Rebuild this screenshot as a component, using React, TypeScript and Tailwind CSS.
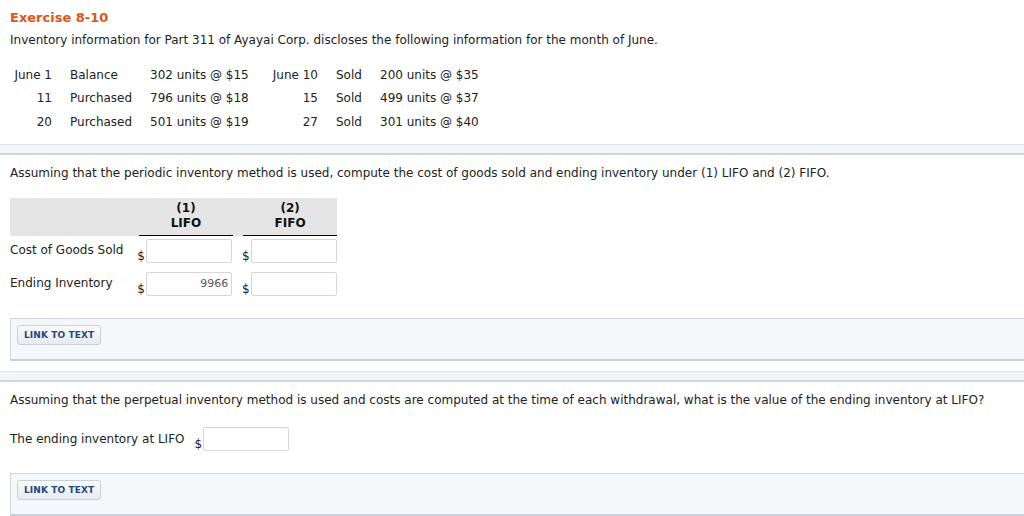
const rows = [
  ["June 1", "Balance", "302 units @ $15", "June 10", "Sold", "200 units @ $35"],
  ["11", "Purchased", "796 units @ $18", "15", "Sold", "499 units @ $37"],
  ["20", "Purchased", "501 units @ $19", "27", "Sold", "301 units @ $40"],
];

function Separator() {
  return <div className="h-[11px] border-t border-[#dfe5ec] border-b-2 border-b-[#cfd7e1] bg-[#f2f5f8]" />;
}

function LinkBox() {
  return (
    <div className="ml-[10px] h-[43px] border border-[#cfd6df] border-b-2 border-b-[#c9d1dc] border-r-0 bg-[#f5f8fb] pl-[6px] pt-[6px]">
      <button className="h-[20px] px-[6px] rounded-[3px] border border-[#c8d0da] bg-gradient-to-b from-[#fbfcfd] to-[#e6ebf1] text-[9px] font-bold text-[#27477f] leading-none tracking-[0.1px]">
        LINK TO TEXT
      </button>
    </div>
  );
}

function Money({ value }: { value?: string }) {
  return (
    <div className="flex items-end">
      <span className="w-[9px] text-[12px] leading-none mb-[1px]">$</span>
      <div className="w-[86px] h-[24px] border border-[#d6d6d6] rounded-[2px] bg-white text-right pr-[3px] text-[11px] text-[#555] leading-[22px]">
        {value}
      </div>
    </div>
  );
}

export default function App() {
  return (
    <div className="w-[1024px] h-[516px] overflow-hidden bg-white text-[#222] text-[12px] font-['DejaVu_Sans',Verdana,sans-serif]">
      <div className="px-[10px] pt-[10px]">
        <div className="text-[13px] font-bold text-[#e05418] leading-[16px]">Exercise 8-10</div>
        <div className="mt-[6px] leading-[16px]">
          Inventory information for Part 311 of Ayayai Corp. discloses the following information for the month of June.
        </div>
        <div className="mt-[15px] flex flex-col">
          {rows.map((r, i) => (
            <div key={i} className="flex h-[23.5px] items-center whitespace-nowrap">
              <div className="w-[42px] text-right">{r[0]}</div>
              <div className="ml-[18px] w-[80px]">{r[1]}</div>
              <div className="w-[118px]">{r[2]}</div>
              <div className="w-[50px] text-right">{r[3]}</div>
              <div className="ml-[18px] w-[44px]">{r[4]}</div>
              <div>{r[5]}</div>
            </div>
          ))}
        </div>
      </div>
      <div className="mt-[10px]">
        <Separator />
      </div>
      <div className="px-[10px] pt-[10px]">
        <div className="leading-[16px]">
          Assuming that the periodic inventory method is used, compute the cost of goods sold and ending inventory under (1) LIFO and (2) FIFO.
        </div>
        <div className="mt-[17px] w-[327px]">
          <div className="flex h-[38px] bg-[#e5e5e5]">
            <div className="w-[129px]" />
            <div className="w-[95px] flex flex-col items-center justify-center border-b border-black font-bold leading-[15px] text-[12px] text-[#111]">
              <span>(1)</span>
              <span>LIFO</span>
            </div>
            <div className="w-[10px]" />
            <div className="w-[94px] flex flex-col items-center justify-center border-b border-black font-bold leading-[15px] text-[12px] text-[#111]">
              <span>(2)</span>
              <span>FIFO</span>
            </div>
          </div>
          <div className="flex items-end mt-[3px]">
            <div className="w-[129px] self-start pt-[2px]">Cost of Goods Sold</div>
            <Money />
            <div className="w-[10px]" />
            <Money />
          </div>
          <div className="flex items-end mt-[9px]">
            <div className="w-[129px] self-start pt-[2px]">Ending Inventory</div>
            <Money value="9966" />
            <div className="w-[10px]" />
            <Money />
          </div>
        </div>
      </div>
      <div className="mt-[22px]">
        <LinkBox />
      </div>
      <div className="mt-[10px]">
        <Separator />
      </div>
      <div className="px-[10px] pt-[10px]">
        <div className="leading-[16px]">
          Assuming that the perpetual inventory method is used and costs are computed at the time of each withdrawal, what is the value of the ending inventory at LIFO?
        </div>
        <div className="flex items-end mt-[19px]">
          <div className="self-start pt-[3px] pr-[10px]">The ending inventory at LIFO</div>
          <Money />
        </div>
      </div>
      <div className="mt-[22px]">
        <LinkBox />
      </div>
    </div>
  );
}
